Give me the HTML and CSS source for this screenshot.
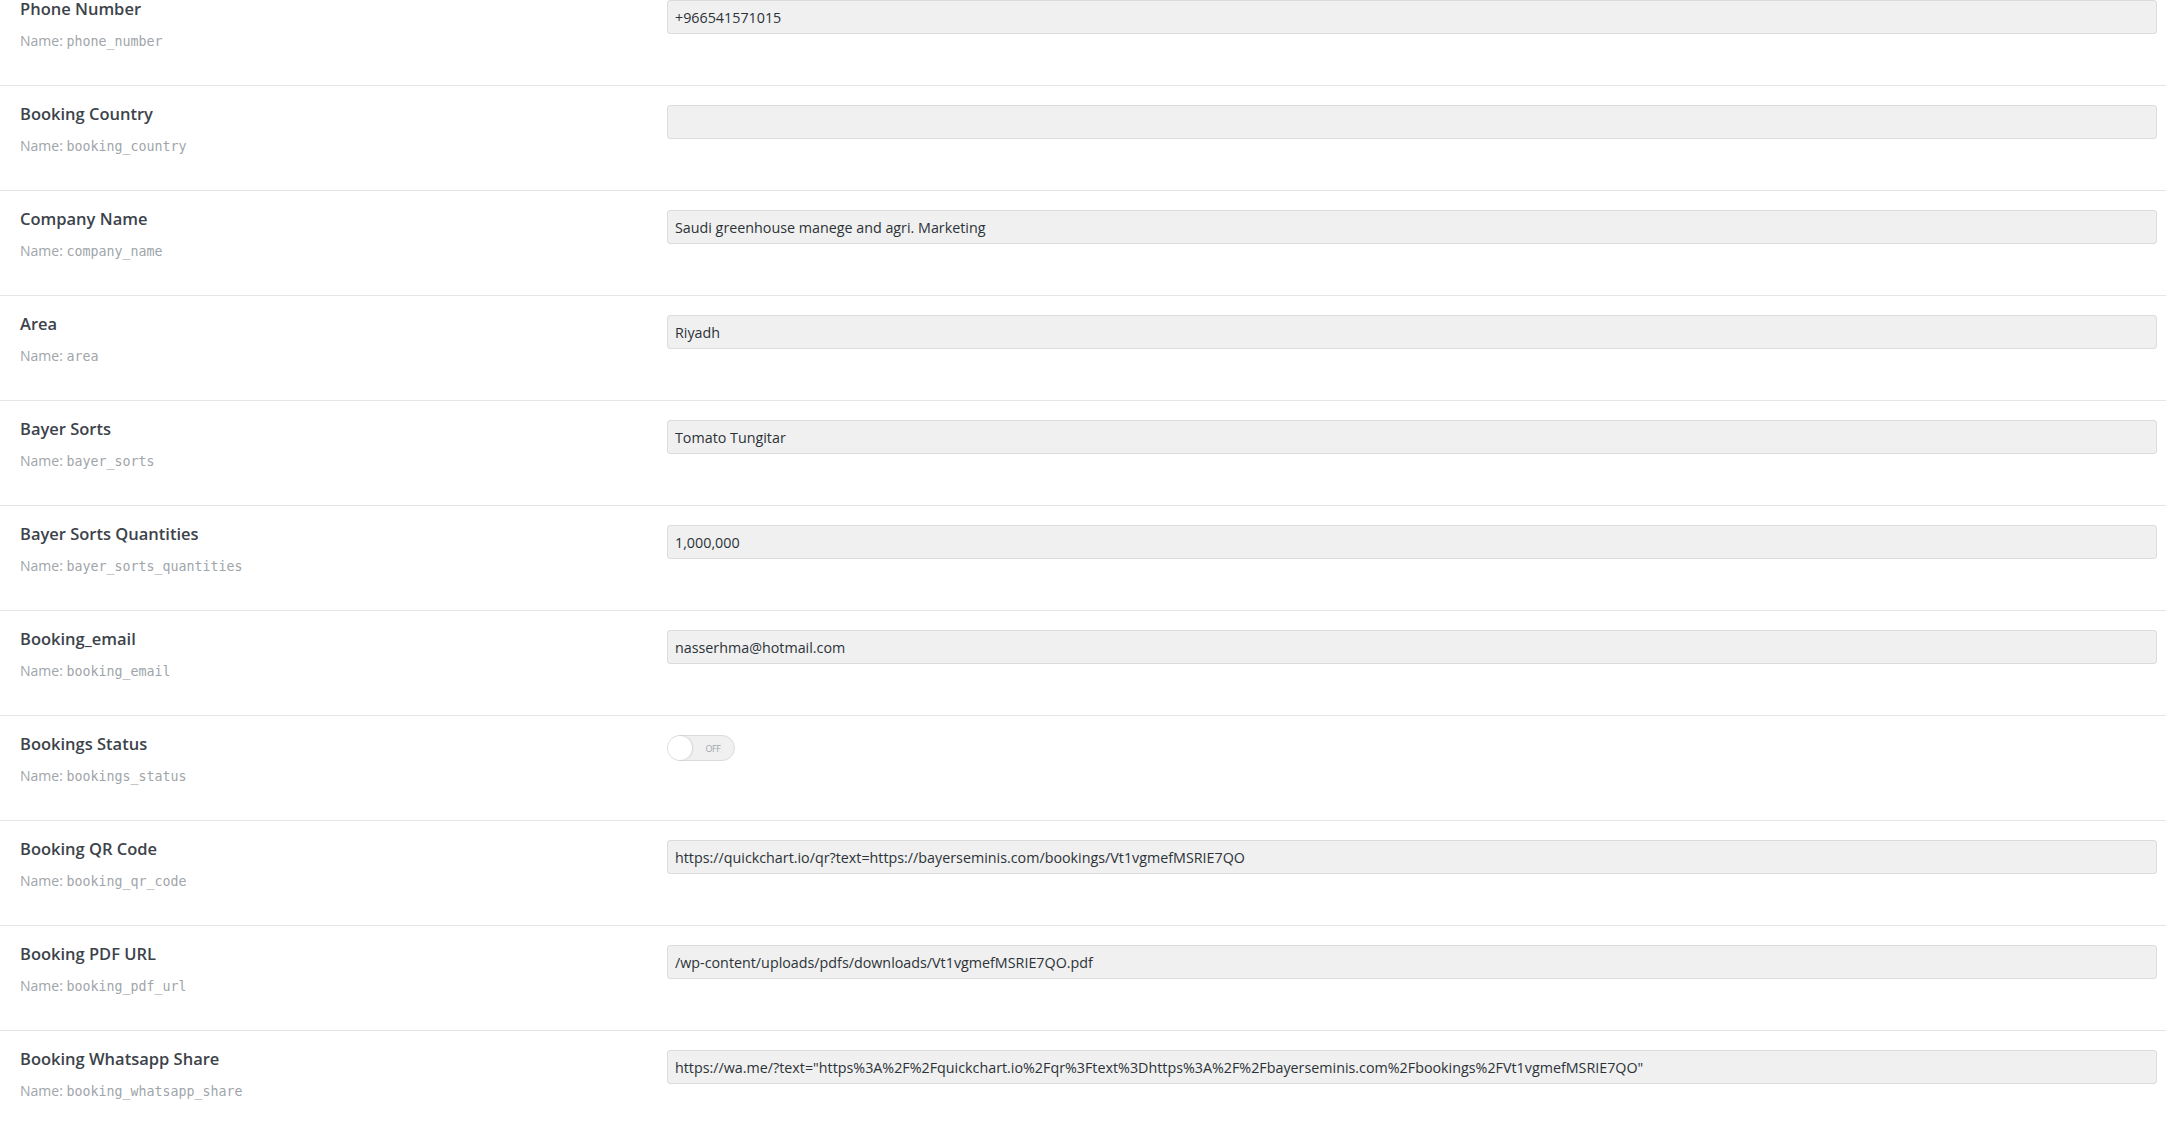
FILE: index.html
```html
<!DOCTYPE html>
<html>
<head>
  <meta charset="UTF-8">
  <title>Booking fields</title>
  <link rel="stylesheet" href="styles.css">
</head>
<body>
  <div class="fields">
    <div class="field">
      <div class="field-label">
        <div class="title">Phone Number</div>
        <div class="name">Name: <code>phone_number</code></div>
      </div>
      <div class="field-input"><input type="text" value="+966541571015"></div>
    </div>

    <div class="field">
      <div class="field-label">
        <div class="title">Booking Country</div>
        <div class="name">Name: <code>booking_country</code></div>
      </div>
      <div class="field-input"><input type="text" value=""></div>
    </div>

    <div class="field">
      <div class="field-label">
        <div class="title">Company Name</div>
        <div class="name">Name: <code>company_name</code></div>
      </div>
      <div class="field-input"><input type="text" value="Saudi greenhouse manege and agri. Marketing"></div>
    </div>

    <div class="field">
      <div class="field-label">
        <div class="title">Area</div>
        <div class="name">Name: <code>area</code></div>
      </div>
      <div class="field-input"><input type="text" value="Riyadh"></div>
    </div>

    <div class="field">
      <div class="field-label">
        <div class="title">Bayer Sorts</div>
        <div class="name">Name: <code>bayer_sorts</code></div>
      </div>
      <div class="field-input"><input type="text" value="Tomato Tungitar"></div>
    </div>

    <div class="field">
      <div class="field-label">
        <div class="title">Bayer Sorts Quantities</div>
        <div class="name">Name: <code>bayer_sorts_quantities</code></div>
      </div>
      <div class="field-input"><input type="text" value="1,000,000"></div>
    </div>

    <div class="field">
      <div class="field-label">
        <div class="title">Booking_email</div>
        <div class="name">Name: <code>booking_email</code></div>
      </div>
      <div class="field-input"><input type="text" value="nasserhma@hotmail.com"></div>
    </div>

    <div class="field">
      <div class="field-label">
        <div class="title">Bookings Status</div>
        <div class="name">Name: <code>bookings_status</code></div>
      </div>
      <div class="field-input">
        <!-- on/off switch -->
        <div class="switch">
          <span class="knob"></span>
          <span class="switch-text">OFF</span>
        </div>
      </div>
    </div>

    <div class="field">
      <div class="field-label">
        <div class="title">Booking QR Code</div>
        <div class="name">Name: <code>booking_qr_code</code></div>
      </div>
      <div class="field-input"><input type="text" value="https://quickchart.io/qr?text=https://bayerseminis.com/bookings/Vt1vgmefMSRIE7QO"></div>
    </div>

    <div class="field">
      <div class="field-label">
        <div class="title">Booking PDF URL</div>
        <div class="name">Name: <code>booking_pdf_url</code></div>
      </div>
      <div class="field-input"><input type="text" value="/wp-content/uploads/pdfs/downloads/Vt1vgmefMSRIE7QO.pdf"></div>
    </div>

    <div class="field">
      <div class="field-label">
        <div class="title">Booking Whatsapp Share</div>
        <div class="name">Name: <code>booking_whatsapp_share</code></div>
      </div>
      <div class="field-input"><input type="text" value='https://wa.me/?text="https%3A%2F%2Fquickchart.io%2Fqr%3Ftext%3Dhttps%3A%2F%2Fbayerseminis.com%2Fbookings%2FVt1vgmefMSRIE7QO"'></div>
    </div>
  </div>
</body>
</html>
```

FILE: styles.css
```css
body {
  margin: 0;
  background: #fff;
  font-family: "Open Sans", "Noto Sans", sans-serif;
  color: #2c3338;
  overflow: hidden;
}
.fields {
  width: 2166px;
  margin-top: -19px;
}
.field {
  display: grid;
  grid-template-columns: 647px 1fr;
  box-sizing: border-box;
  height: 105px;
  padding: 19px 9px 0 20px;
  border-bottom: 1px solid #e5e5e5;
}
.title {
  font-size: 16.5px;
  font-weight: 600;
  line-height: 18px;
  color: #3c434a;
}
.name {
  margin-top: 14px;
  font-size: 14px;
  line-height: 18px;
  color: #a0a5aa;
}
.name code {
  font-family: "DejaVu Sans Mono", monospace;
  font-size: 13.3px;
  color: #a0a5aa;
}
.field-input input {
  display: block;
  width: 100%;
  height: 34px;
  box-sizing: border-box;
  margin: 0;
  padding: 1px 7px 0;
  font-family: "Open Sans", "Noto Sans", sans-serif;
  font-size: 14.3px;
  color: #2c3338;
  background: #f0f0f0;
  border: 1px solid #dcdcde;
  border-radius: 3px;
  outline: none;
}
.switch {
  display: flex;
  align-items: center;
  width: 68px;
  height: 26px;
  box-sizing: border-box;
  border: 1px solid #dcdcde;
  border-radius: 13px;
  background: #f0f0f1;
}
.knob {
  width: 24px;
  height: 24px;
  border-radius: 50%;
  background: #fff;
  box-shadow: 1px 0 2px rgba(0, 0, 0, 0.12);
}
.switch-text {
  flex: 1;
  text-align: center;
  font-size: 9px;
  color: #a0a5aa;
  letter-spacing: -0.5px;
}
```
